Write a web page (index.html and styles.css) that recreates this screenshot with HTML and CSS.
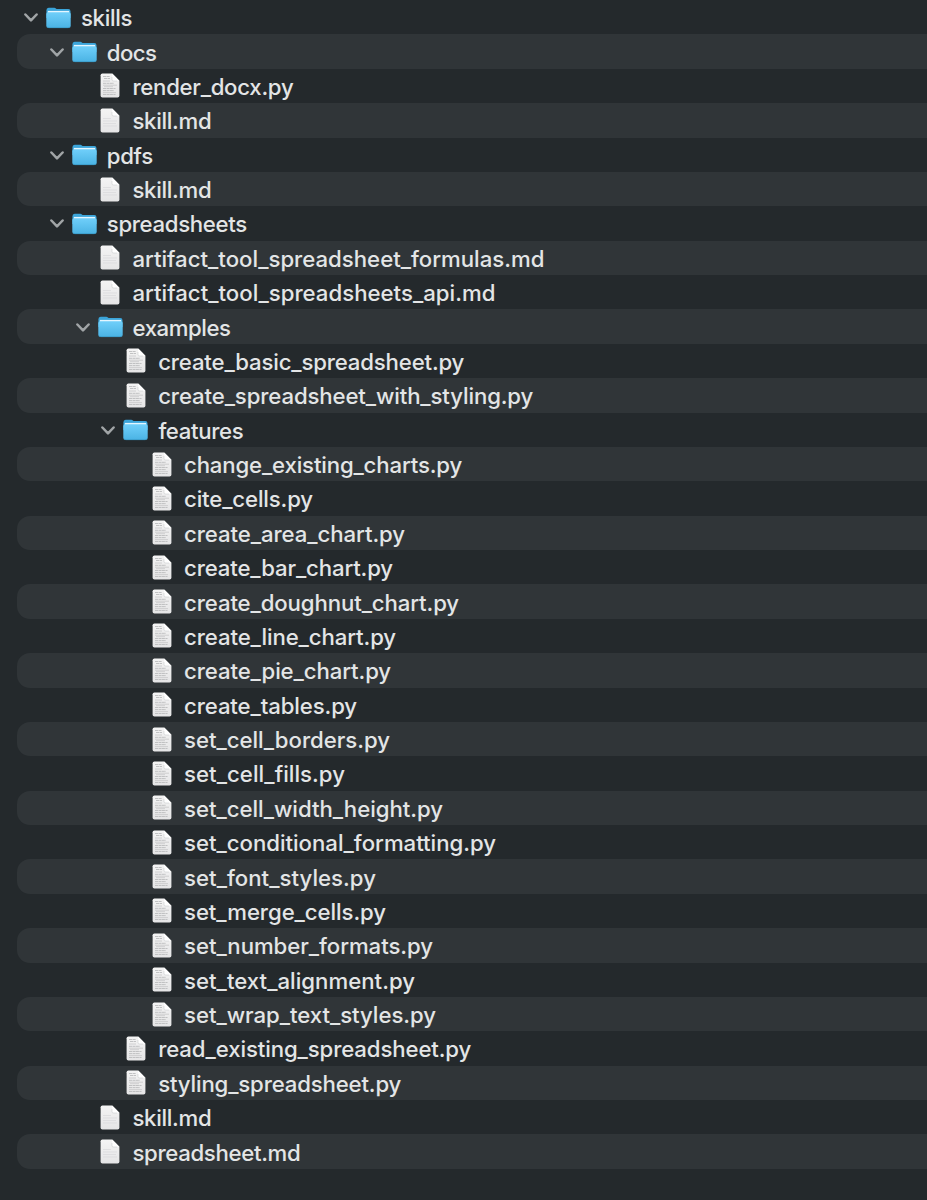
FILE: index.html
```
<!DOCTYPE html>
<html lang="en">
<head>
<meta charset="utf-8">
<title>skills</title>
<link rel="stylesheet" href="styles.css">
</head>
<body>
<svg class="defs" aria-hidden="true">
  <defs>
    <linearGradient id="front" x1="0" y1="0" x2="0" y2="1"><stop offset="0" stop-color="#70cffa"/><stop offset="1" stop-color="#4ab3e4"/></linearGradient>
    <linearGradient id="paper" x1="0" y1="0" x2="0" y2="1"><stop offset="0" stop-color="#f4f4f4"/><stop offset="1" stop-color="#e5e5e6"/></linearGradient>
    <symbol id="chevron" viewBox="0 0 14 9"><path d="M1.400 1.500 7 7.400l5.600-5.900" fill="none" stroke="#a1a5a7" stroke-width="2.500" stroke-linecap="round" stroke-linejoin="round"/></symbol>
    <symbol id="folder" viewBox="0 0 25 22">
      <path d="M.4 3.200Q.4.7 2.600.7h5.600q1 0 1.700.7l.7.7h11.700q2.200 0 2.200 2.200V11H.4z" fill="#3ba5da"/>
      <path d="M1.800 3.900h21.400v3H1.800z" fill="#e4f6ff"/>
      <path d="M.3 7Q.3 5.200 2.200 5.200h20.600q1.900 0 1.900 1.800v11.700q0 2.300-2.300 2.300H2.600Q.3 21 .3 18.700z" fill="url(#front)"/>
      <path d="M1.100 19.700q.6 1 1.800 1h19.200q1.200 0 1.800-1" fill="none" stroke="#348fba" stroke-width=".6"/>
    </symbol>
    <symbol id="page" viewBox="0 0 20 25">
      <path d="M.6 2.300Q.6.5 2.400.5h9.800l7.200 7.200v15q0 1.800-1.800 1.800H2.400Q.6 24.500.6 22.700z" fill="url(#paper)"/>
      <path d="M12.200.5v5.500q0 1.700 1.700 1.700h5.500z" fill="#fff"/>
      <path d="M11.900 4v2.500q0 1.600 1.600 1.600h3.500" fill="none" stroke="#d3d4d5" stroke-width=".7"/>
    </symbol>
    <symbol id="md" viewBox="0 0 20 25"><use href="#page"/>
      <path d="M3 10.500h8M3 13h14M3 15.500h13M3 18h14" stroke="#d8d9db" stroke-width=".7"/>
    </symbol>
    <symbol id="py" viewBox="0 0 20 25"><use href="#page"/>
      <path d="M3 3.500h7M4 5.500h6M3 10.300h11M3 15.500h13M3 17.600h11M3 21.500h13" stroke="#bbbcbd" stroke-width=".9" stroke-dasharray="3.500 .5 2 .4"/>
      <path d="M3 8h7M3 12.200h14M4 13.700h9M3 19.600h13" stroke="#c6c7c8" stroke-width=".8"/>
    </symbol>
  </defs>
</svg>
<ul class="tree" id="tree"></ul>
<script src="tree.js"></script>
</body>
</html>
```
FILE: styles.css
```
body {
  margin: 0;
  background: #24292c;
  color: #e3e5e6;
  font-family: Inter, "Liberation Sans", sans-serif;
  font-size: 22.2px;
  font-weight: 450;
}
.defs { position: absolute; width: 0; height: 0; }
.tree {
  height: 1200px;
  margin: 0;
  padding: 0 0 0 17px;
  box-sizing: border-box;
  overflow: hidden;
  list-style: none;
}
.row {
  display: flex;
  align-items: center;
  height: 34.39px;
  padding-left: 7px;
  border-radius: 13px 0 0 13px;
  white-space: nowrap;
}
.row:nth-child(even) { background: #303538; }
.level-1 { padding-left: 32.8px; }
.level-2 { padding-left: 58.6px; }
.level-3 { padding-left: 84.4px; }
.level-4 { padding-left: 110.2px; }
.level-5 { padding-left: 136px; }
.chevron { flex: none; width: 14px; height: 9px; margin: 1px 8px 0 0; }
.folder { flex: none; width: 25px; height: 22px; margin: 1px 10px 0 0; }
.file { flex: none; width: 20px; height: 25px; margin: 0 12px 0 -1px; }
.name { padding-top: 2px; line-height: 32px; }
```
FILE: tree.js
```
// Each entry: depth, name, rendered width of the name
const entries = [
  [0, "skills", 51], [1, "docs", 49.5], [3, "render_docx.py", 161], [3, "skill.md", 79],
  [1, "pdfs", 46], [3, "skill.md", 79], [1, "spreadsheets", 140],
  [3, "artifact_tool_spreadsheet_formulas.md", 412], [3, "artifact_tool_spreadsheets_api.md", 363],
  [2, "examples", 98], [4, "create_basic_spreadsheet.py", 306], [4, "create_spreadsheet_with_styling.py", 375],
  [3, "features", 85], [5, "change_existing_charts.py", 278], [5, "cite_cells.py", 129],
  [5, "create_area_chart.py", 221], [5, "create_bar_chart.py", 209], [5, "create_doughnut_chart.py", 275],
  [5, "create_line_chart.py", 212], [5, "create_pie_chart.py", 207], [5, "create_tables.py", 173],
  [5, "set_cell_borders.py", 206], [5, "set_cell_fills.py", 161], [5, "set_cell_width_height.py", 259],
  [5, "set_conditional_formatting.py", 312], [5, "set_font_styles.py", 192], [5, "set_merge_cells.py", 202],
  [5, "set_number_formats.py", 249], [5, "set_text_alignment.py", 231], [5, "set_wrap_text_styles.py", 252],
  [4, "read_existing_spreadsheet.py", 313], [4, "styling_spreadsheet.py", 243],
  [3, "skill.md", 79], [3, "spreadsheet.md", 168]
];
const icon = (id, cls) => `<svg class="${cls}"><use href="#${id}"/></svg>`;
const tree = document.getElementById("tree");
for (const [depth, name, width] of entries) {
  const row = document.createElement("li");
  row.className = `row level-${depth}`;
  const ext = name.split(".")[1];
  row.innerHTML = (ext ? icon(ext, "file") : icon("chevron", "chevron") + icon("folder", "folder"))
    + `<span class="name">${name}</span>`;
  tree.append(row);
  const label = row.querySelector(".name");
  const gap = (width - label.getBoundingClientRect().width) / name.length;
  label.style.letterSpacing = `${gap}px`;
}
```
